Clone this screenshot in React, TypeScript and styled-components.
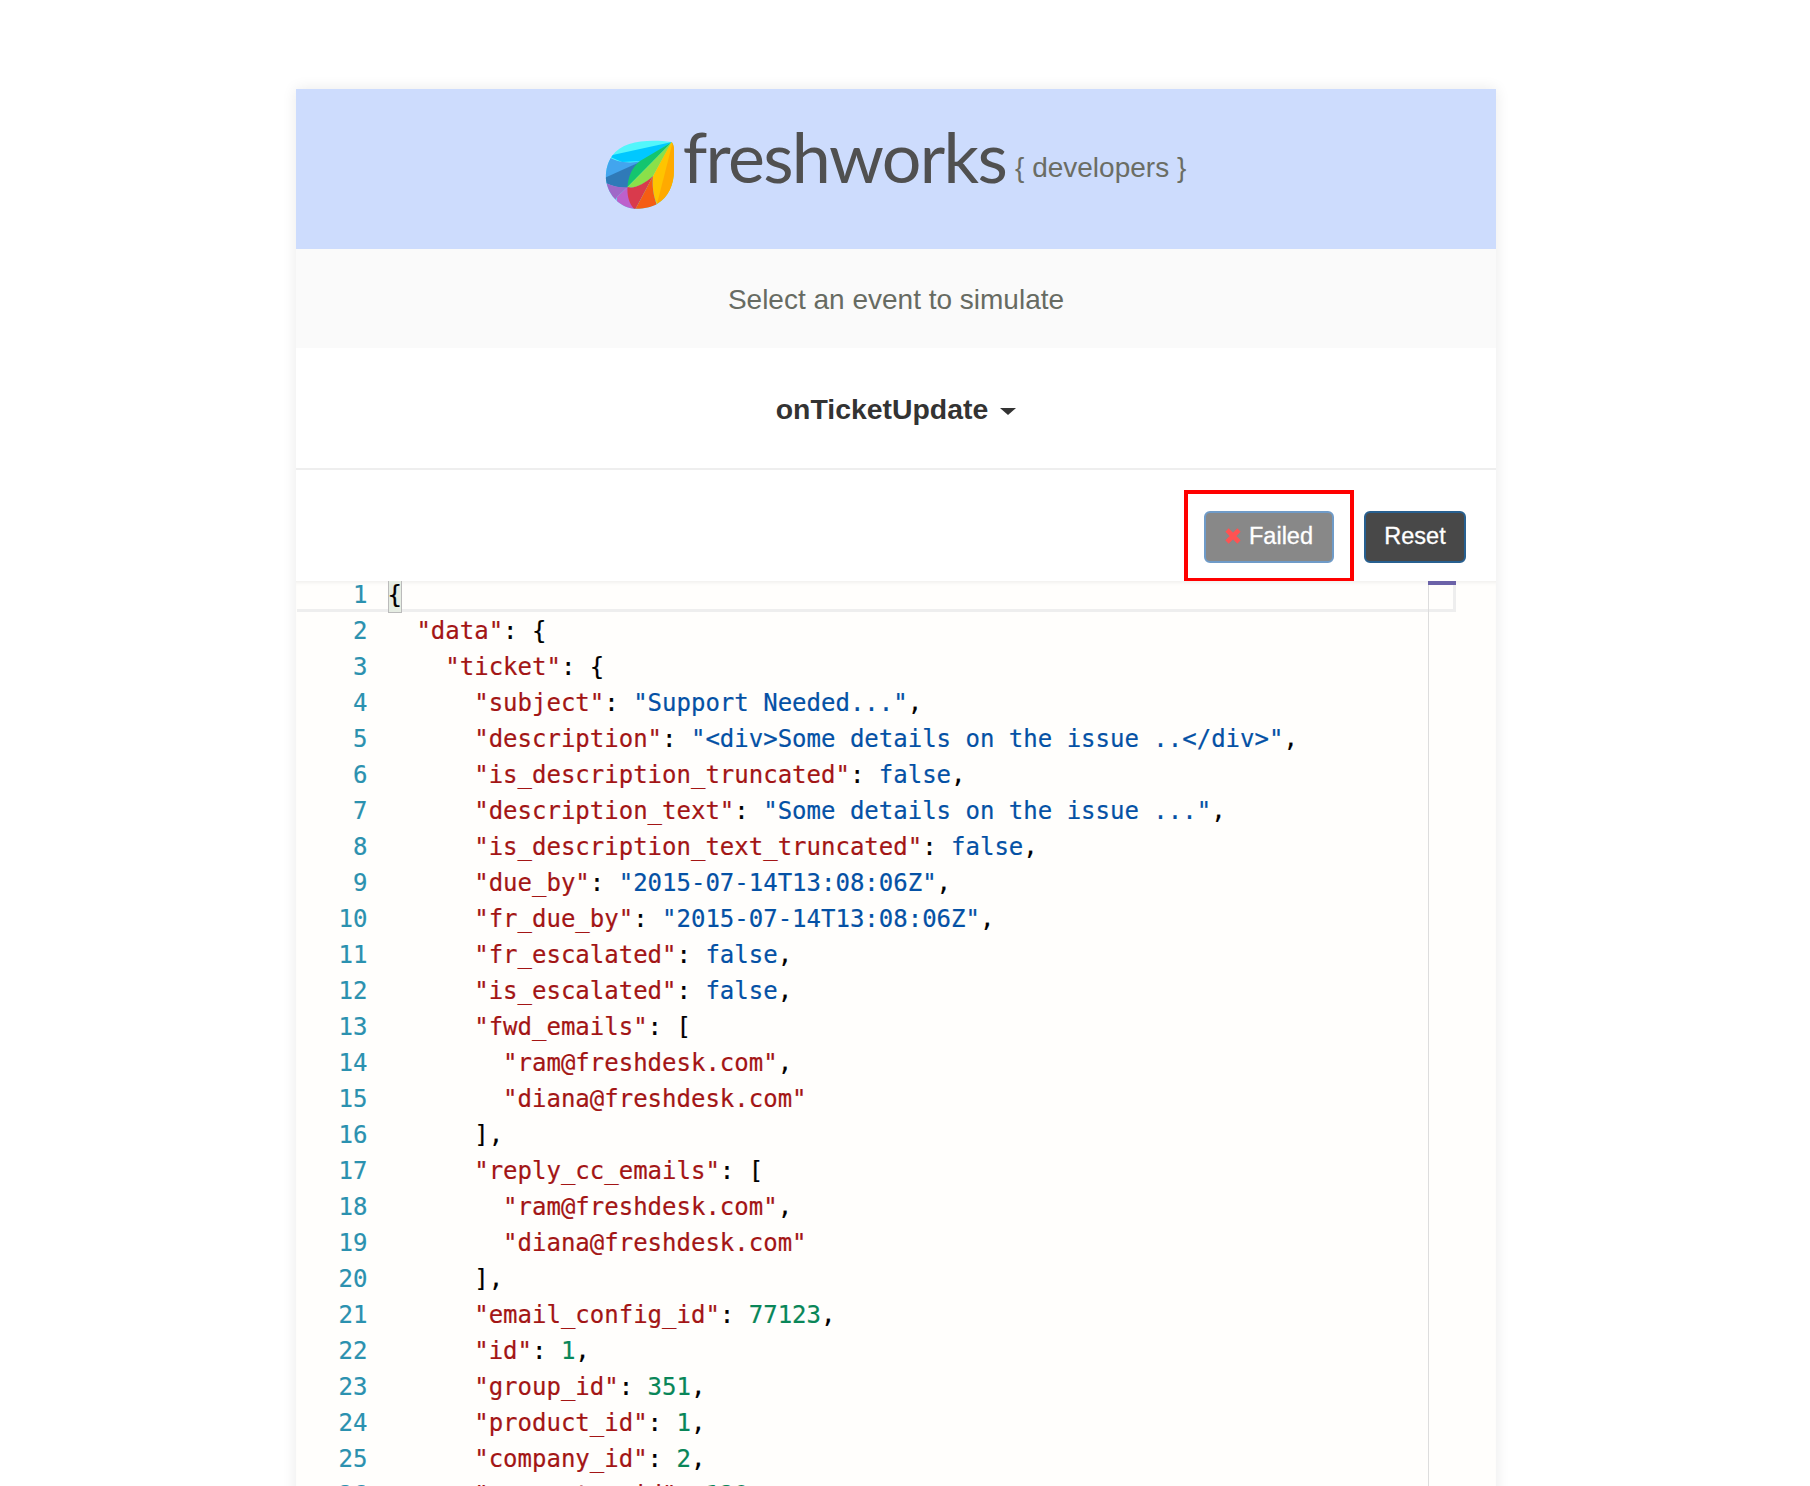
import React from "react";
import styled, { createGlobalStyle } from "styled-components";

const Global = createGlobalStyle`
  html, body { margin: 0; padding: 0; background: #fff; height: 1486px; overflow: hidden; }
  body { font-family: "Liberation Sans", Arial, sans-serif; }
`;

const Page = styled.div`
  padding: 89px 0 0 296px;
  height: 1397px;
  overflow: hidden;
`;

const Card = styled.main`
  width: 1200px;
  background: #fff;
  box-shadow: 0 0 14px rgba(0, 0, 0, 0.09);
  height: 1500px;
`;

const Header = styled.header`
  height: 160px;
  box-sizing: border-box;
  padding-right: 12px;
  background: #cddcfd;
  display: flex;
  align-items: flex-start;
  justify-content: center;
`;

const LogoMark = styled.svg`
  width: 110px;
  height: 100px;
  margin: 31px -17px 0 -4px;
  flex: none;
`;

const Wordmark = styled.span`
  font-family: Lato, "Open Sans", sans-serif;
  font-weight: 400;
  font-size: 70px;
  line-height: 80px;
  margin-top: 27px;
  color: #505050;
  letter-spacing: -1.7px;
`;

const Tagline = styled.span`
  font-size: 28px;
  line-height: 32px;
  margin: 63px 0 0 9px;
  color: #6b6d64;
`;

const Prompt = styled.div`
  height: 99px;
  box-sizing: border-box;
  padding-top: 36px;
  background: #fafafa;
  text-align: center;
  font-size: 28px;
  line-height: 30px;
  color: #676b62;
`;

const EventRow = styled.div`
  height: 122px;
  box-sizing: border-box;
  padding-top: 46px;
  border-bottom: 2px solid #eeeeee;
  display: flex;
  justify-content: center;
  gap: 12px;
  font-size: 28.4px;
  line-height: 30px;
  font-weight: 700;
  color: #333;
`;

const Caret = styled.i`
  width: 0;
  height: 0;
  margin-top: 14px;
  border-top: 7px solid #333;
  border-left: 8px solid transparent;
  border-right: 8px solid transparent;
`;

const Toolbar = styled.div`
  height: 111px;
  box-sizing: border-box;
  padding: 20px 30px 0 0;
  display: flex;
  justify-content: flex-end;
  align-items: flex-start;
  gap: 10px;
`;

const Annotated = styled.div`
  box-sizing: border-box;
  width: 170px;
  height: 92px;
  border: 4px solid #ff0000;
  padding: 17px 16px 0;
`;

const Button = styled.button<{ $dark?: boolean }>`
  box-sizing: border-box;
  height: 52px;
  width: ${(p) => (p.$dark ? "102px" : "130px")};
  margin-top: ${(p) => (p.$dark ? "21px" : "0")};
  border: 2px solid ${(p) => (p.$dark ? "#286090" : "#6f9bc8")};
  border-radius: 6px;
  background: ${(p) => (p.$dark ? "#484848" : "#888888")};
  color: #fff;
  font-family: "Liberation Sans", Arial, sans-serif;
  font-size: 23.5px;
  -webkit-text-stroke: 0.3px #fff;
  padding: 0 0 2px;
  display: flex;
  align-items: center;
  justify-content: center;
  gap: 8px;
`;

const Editor = styled.section`
  position: relative;
  height: 905px;
  overflow: hidden;
  background: #fffefc;
  box-shadow: inset 0 4px 4px -3px rgba(0, 0, 0, 0.08);
`;

const ActiveLine = styled.div`
  position: absolute;
  top: 0;
  left: 1px;
  box-sizing: border-box;
  width: 1159px;
  height: 31px;
  border-right: 3px solid #eeeeee;
  border-bottom: 3px solid #eeeeee;
`;

const BracketMatch = styled.div`
  position: absolute;
  top: 0;
  left: 92px;
  box-sizing: border-box;
  width: 14px;
  height: 32px;
  background: #e6ede3;
  border: 1.5px solid #bbbbbb;
  border-top: none;
`;

const PrintMargin = styled.div`
  position: absolute;
  top: 0;
  bottom: 0;
  left: 1132px;
  width: 1px;
  background: #dddddd;
`;

const OverviewMark = styled.div`
  position: absolute;
  top: 0;
  left: 1132px;
  width: 28px;
  height: 4px;
  background: #6b62a8;
`;

const Lines = styled.div`
  position: relative;
  margin-top: -4px;
`;

const Row = styled.div`
  display: flex;
  height: 36px;
  font-family: "DejaVu Sans Mono", monospace;
  font-size: 24px;
  line-height: 36px;
  white-space: pre;
  -webkit-text-stroke: 0.2px currentColor;
`;

const Gutter = styled.span`
  width: 71.5px;
  flex: none;
  text-align: right;
  color: #2b91af;
`;

const Code = styled.span`
  margin-left: 20px;
  color: #000;
`;

const Tok = styled.span<{ $k: "key" | "str" | "bool" | "num" }>`
  color: ${(p) =>
    ({ key: "#a31515", str: "#0451a5", bool: "#0451a5", num: "#098658" })[p.$k]};
`;

type T = [string] | [string, "key" | "str" | "bool" | "num"];
const k = (s: string): T => [s, "key"];
const v = (s: string): T => [s, "str"];
const b = (s: string): T => [s, "bool"];
const n = (s: string): T => [s, "num"];
const p = (s: string): T => [s];

const prop = (indent: number, key: string, val: T, tail = ","): T[] => [
  p(" ".repeat(indent)),
  k(`"${key}"`),
  p(": "),
  val,
  p(tail),
];

const data: T[][] = [
  [p("{")],
  [p("  "), k('"data"'), p(": {")],
  [p("    "), k('"ticket"'), p(": {")],
  prop(6, "subject", v('"Support Needed..."')),
  prop(6, "description", v('"<div>Some details on the issue ..</div>"')),
  prop(6, "is_description_truncated", b("false")),
  prop(6, "description_text", v('"Some details on the issue ..."')),
  prop(6, "is_description_text_truncated", b("false")),
  prop(6, "due_by", v('"2015-07-14T13:08:06Z"')),
  prop(6, "fr_due_by", v('"2015-07-14T13:08:06Z"')),
  prop(6, "fr_escalated", b("false")),
  prop(6, "is_escalated", b("false")),
  [p("      "), k('"fwd_emails"'), p(": [")],
  [p("        "), k('"ram@freshdesk.com"'), p(",")],
  [p("        "), k('"diana@freshdesk.com"')],
  [p("      ],")],
  [p("      "), k('"reply_cc_emails"'), p(": [")],
  [p("        "), k('"ram@freshdesk.com"'), p(",")],
  [p("        "), k('"diana@freshdesk.com"')],
  [p("      ],")],
  prop(6, "email_config_id", n("77123")),
  prop(6, "id", n("1")),
  prop(6, "group_id", n("351")),
  prop(6, "product_id", n("1")),
  prop(6, "company_id", n("2")),
  prop(6, "requester_id", n("129")),
];

const Logo = () => (
  <LogoMark viewBox="0 0 110 100" aria-hidden>
    <defs>
      <clipPath id="leaf">
        <path d="M81.5 22C60 19 33 20 22 36C17 43 15.5 52 16 60C18 76 31 88 45 88.8C53 89 62 87 68 83.5C78 77 84 65 84 50L84 30C84 26 83 23 81.5 22Z" />
      </clipPath>
    </defs>
    <g clipPath="url(#leaf)">
      <rect x="10" y="15" width="80" height="80" fill="#52f6fb" />
      <path d="M82 22L18 36L32 42L52 41Z" fill="#00c8ff" />
      <path d="M18 36C24 42 40 44 52 41L10 62Z" fill="#42a5ee" />
      <path d="M10 60L52 41L37 68C28 68 18 65 10 60Z" fill="#2f7ab8" />
      <path d="M82 22L50 41C42 47 38 57 37.5 67Z" fill="#14c56f" />
      <path d="M82 22L37.5 67C45 69 55 64 63 56Z" fill="#8ae04a" />
      <path d="M82 21L63 56C62 66 63 76 67 84L95 60Z" fill="#ffc400" />
      <path d="M83 21L67 84L95 70L90 20Z" fill="#ffaa00" />
      <path d="M10 60C18 65 28 68 37.5 67L27 77L20 90Z" fill="#9f68c8" />
      <path d="M27 77L37.5 67L46 92L25 92Z" fill="#bd60cc" />
      <path d="M37.5 67C45 69 54 64 63 56L45 90C39 84 37 76 37.5 67Z" fill="#d93a4c" />
      <path d="M63 56L45 90L70 92C63 78 62 66 63 56Z" fill="#f55d13" />
    </g>
  </LogoMark>
);

const FailIcon = () => (
  <svg width="16" height="16" viewBox="0 0 16 16" aria-hidden>
    <path d="M2 2L14 14M14 2L2 14" stroke="#ff5252" strokeWidth="4.6" strokeLinecap="butt" />
  </svg>
);

export default function App() {
  return (
    <Page>
      <Global />
      <Card>
        <Header>
          <Logo />
          <Wordmark>freshworks</Wordmark>
          <Tagline>{"{ developers }"}</Tagline>
        </Header>
        <Prompt>Select an event to simulate</Prompt>
        <EventRow>
          onTicketUpdate
          <Caret />
        </EventRow>
        <Toolbar>
          <Annotated>
            <Button>
              <FailIcon />
              Failed
            </Button>
          </Annotated>
          <Button $dark>Reset</Button>
        </Toolbar>
        <Editor>
          <ActiveLine />
          <PrintMargin />
          <OverviewMark />
          <BracketMatch />
          <Lines>
            {data.map((toks, i) => (
              <Row key={i}>
                <Gutter>{i + 1}</Gutter>
                <Code>
                  {toks.map(([s, kind], j) =>
                    kind ? (
                      <Tok key={j} $k={kind}>
                        {s}
                      </Tok>
                    ) : (
                      <React.Fragment key={j}>{s}</React.Fragment>
                    )
                  )}
                </Code>
              </Row>
            ))}
          </Lines>
        </Editor>
      </Card>
    </Page>
  );
}
